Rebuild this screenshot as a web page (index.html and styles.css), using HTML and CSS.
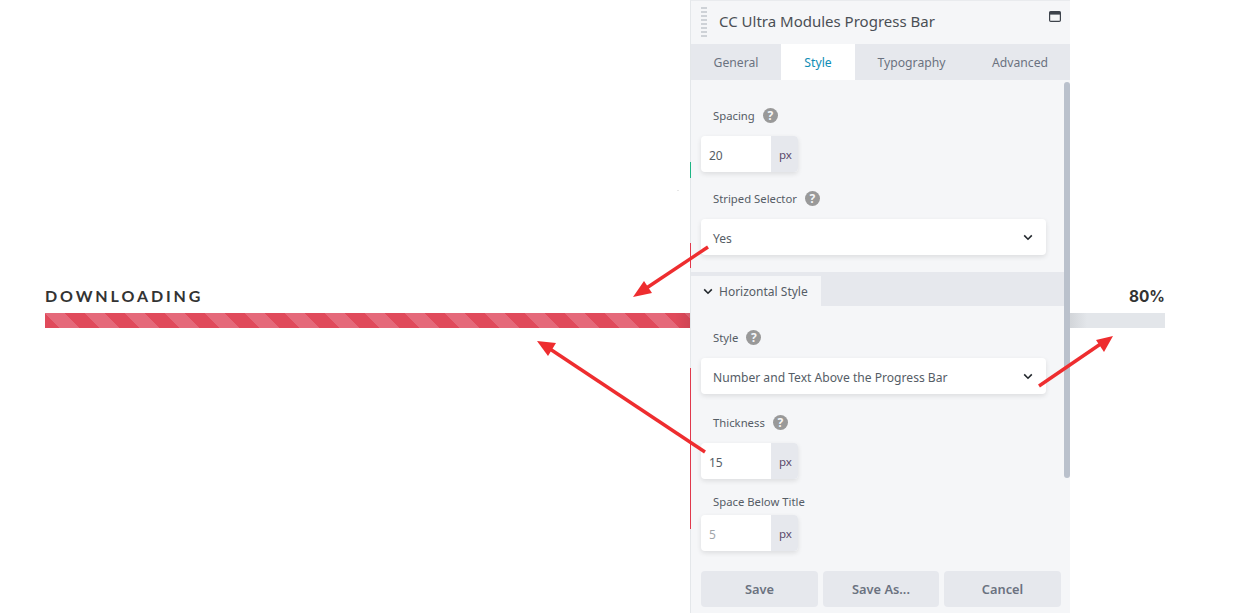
FILE: index.html
```html
<!DOCTYPE html>
<html lang="en">
<head>
    <meta charset="UTF-8">
    <meta name="viewport" content="width=device-width, initial-scale=1.0">
    <title>CC Ultra Modules Progress Bar</title>
    <link rel="stylesheet" href="styles.css">
</head>
<body>
    <div class="page">
        <div class="progress">
            <div class="progress-head">
                <span class="progress-title">DOWNLOADING</span>
                <span class="progress-value">80%</span>
            </div>
            <div class="progress-track">
                <div class="progress-fill"></div>
            </div>
        </div>
    </div>

    <div class="panel">
        <div class="panel-head">
            <div class="grip"></div>
            <span class="panel-title">CC Ultra Modules Progress Bar</span>
            <svg class="panel-max" width="12" height="11" viewBox="0 0 12 11">
                <rect x="0.6" y="0.6" width="10.8" height="9.8" rx="1.2" fill="none" stroke="#3d434b" stroke-width="1.2"/>
                <rect x="0.6" y="0.6" width="10.8" height="3" fill="#3d434b"/>
            </svg>
        </div>
        <div class="tabs">
            <div class="tab tab-general">General</div>
            <div class="tab tab-style active">Style</div>
            <div class="tab tab-typo">Typography</div>
            <div class="tab tab-advanced">Advanced</div>
        </div>
        <div class="panel-body">
            <div class="scrollbar"></div>

            <div class="field field-spacing">
                <div class="label">Spacing <span class="help">?</span></div>
                <div class="unit-input"><span class="unit-value">20</span><span class="unit">px</span></div>
            </div>

            <div class="field field-striped">
                <div class="label">Striped Selector <span class="help">?</span></div>
                <div class="select">
                    <span>Yes</span>
                    <svg class="chevron" width="10" height="7" viewBox="0 0 10 7"><path d="M1.2 1.4 5 5.2l3.8-3.8" fill="none" stroke="#23282d" stroke-width="1.6"/></svg>
                </div>
            </div>

            <div class="section-head">
                <div class="section-tab">
                    <svg class="chevron" width="10" height="7" viewBox="0 0 10 7"><path d="M1.2 1.4 5 5.2l3.8-3.8" fill="none" stroke="#23282d" stroke-width="1.6"/></svg>
                    <span>Horizontal Style</span>
                </div>
            </div>

            <div class="field field-style">
                <div class="label">Style <span class="help">?</span></div>
                <div class="select">
                    <span>Number and Text Above the Progress Bar</span>
                    <svg class="chevron" width="10" height="7" viewBox="0 0 10 7"><path d="M1.2 1.4 5 5.2l3.8-3.8" fill="none" stroke="#23282d" stroke-width="1.6"/></svg>
                </div>
            </div>

            <div class="field field-thickness">
                <div class="label">Thickness <span class="help">?</span></div>
                <div class="unit-input"><span class="unit-value">15</span><span class="unit">px</span></div>
            </div>

            <div class="field field-below">
                <div class="label label-tight">Space Below Title</div>
                <div class="unit-input"><span class="unit-value placeholder">5</span><span class="unit">px</span></div>
            </div>
        </div>
        <div class="panel-foot">
            <button class="btn btn-save">Save</button>
            <button class="btn btn-saveas">Save As...</button>
            <button class="btn btn-cancel">Cancel</button>
        </div>
    </div>

    <div class="mark mark-dot"></div>
    <div class="mark mark-green"></div>
    <div class="mark mark-red-top"></div>
    <div class="mark mark-red-bottom"></div>

    <svg class="arrows" width="1255" height="613" viewBox="0 0 1255 613">
        <g stroke="#ee2d2f" stroke-width="3.4" fill="none">
            <line x1="708" y1="247" x2="645" y2="289"/>
            <line x1="705" y1="452" x2="550" y2="349"/>
            <line x1="1039" y1="386" x2="1102" y2="343"/>
        </g>
        <g fill="#ee2d2f">
            <polygon points="633,297 644,281 652,293"/>
            <polygon points="537,341 556,343 548,356"/>
            <polygon points="1113,336 1104,352 1096,340"/>
        </g>
    </svg>
</body>
</html>
```

FILE: styles.css
```css
* {
    box-sizing: border-box;
}
body {
    margin: 0;
    height: 613px;
    overflow: hidden;
    background: #fff;
    font-family: "Noto Sans", "Open Sans", sans-serif;
}
.page {
    padding: 287px 90px 0 45px;
}
.progress-head {
    display: flex;
    justify-content: space-between;
    align-items: center;
    height: 18px;
    margin-bottom: 8px;
    color: #333;
    font-weight: 700;
}
.progress-title {
    margin-top: -2px;
    font-family: Lato, sans-serif;
    font-size: 16px;
    letter-spacing: 2.9px;
}
.progress-value {
    font-family: Inter, sans-serif;
    font-size: 15.4px;
}
.progress-track {
    height: 15px;
    background: linear-gradient(to right, #d3d6da 1026px, #e3e6ea 1042px);
}
.progress-fill {
    width: 80%;
    height: 100%;
    background-color: #e04a5b;
    background-image:
        linear-gradient(to right, transparent 630px, rgba(0, 0, 0, 0.08) 645px),
        linear-gradient(45deg, #e5697a 25%, transparent 25%, transparent 50%, #e5697a 50%, #e5697a 75%, transparent 75%);
    background-size: auto, 40px 40px;
}

/* bits of the page showing at the panel's left edge */
.mark {
    position: absolute;
    left: 690px;
    width: 1px;
}
.mark-dot {
    left: 677px;
    top: 190px;
    width: 2px;
    height: 1px;
    background: #e8e8e8;
}
.mark-green {
    top: 162px;
    height: 16px;
    background: #1db584;
}
.mark-red-top {
    top: 243px;
    height: 25px;
    background: #e0394c;
}
.mark-red-bottom {
    top: 368px;
    height: 161px;
    background: #e0394c;
}

.panel {
    position: absolute;
    left: 690px;
    top: 0;
    width: 380px;
    height: 613px;
    display: flex;
    flex-direction: column;
    background: #f5f6f8;
    border-top: 1px solid #e9ebee;
    border-left: 1px solid #e4e7ea;
    color: #555d66;
}
.panel-head {
    display: flex;
    align-items: center;
    height: 43px;
    flex: none;
    padding-left: 10px;
    position: relative;
}
.grip {
    width: 6px;
    height: 31px;
    background: repeating-linear-gradient(#ced2d7 0 2px, #f5f6f8 2px 4px);
}
.panel-title {
    margin-left: 12px;
    margin-top: -3px;
    font-size: 15px;
    color: #4a4f55;
}
.panel-max {
    position: absolute;
    right: 9px;
    top: 10px;
}
.tabs {
    display: flex;
    height: 36px;
    flex: none;
    background: #e6e8ed;
    font-size: 12.2px;
    color: #6b7280;
}
.tab {
    display: flex;
    align-items: center;
    justify-content: center;
}
.tab-general {
    width: 90px;
}
.tab-style {
    width: 74px;
}
.tab-typo {
    width: 113px;
}
.tab-advanced {
    width: 102px;
    padding-left: 2px;
}
.tab.active {
    background: #fff;
    color: #0e8db5;
}
.panel-body {
    flex: 1;
    position: relative;
    overflow: hidden;
}
.scrollbar {
    position: absolute;
    right: 0;
    top: 2px;
    width: 6px;
    height: 396px;
    border-radius: 3px;
    background: #bac1cc;
}
.field {
    padding: 0 10px;
}
.label {
    display: flex;
    align-items: center;
    gap: 8px;
    height: 16px;
    padding-left: 12px;
    margin-bottom: 13px;
    font-size: 11.3px;
    color: #555d66;
}
.label-tight {
    margin-bottom: 6px;
}
.help {
    width: 15px;
    height: 15px;
    margin-top: 1px;
    border-radius: 50%;
    background: #999;
    color: #f5f6f8;
    font-size: 12px;
    font-weight: 700;
    line-height: 15px;
    text-align: center;
}
.field-spacing {
    padding-top: 27px;
}
.field-striped {
    padding-top: 18px;
}
.field-style {
    padding-top: 23px;
}
.field-thickness {
    padding-top: 20px;
}
.field-below {
    padding-top: 14px;
}
.unit-input {
    display: flex;
    width: 97px;
    height: 36px;
    border-radius: 4px;
    overflow: hidden;
    background: #fff;
    box-shadow: 0 2px 5px rgba(0, 0, 0, 0.1);
    font-size: 12px;
}
.unit-value {
    flex: 1;
    padding: 2px 0 0 8px;
    line-height: 36px;
    color: #555d66;
}
.unit-value.placeholder {
    color: #a0a5aa;
}
.unit {
    width: 27px;
    padding-left: 2px;
    line-height: 38px;
    text-align: center;
    background: #e6e8ed;
    color: #5b4a6b;
    font-size: 11.5px;
}
.select {
    display: flex;
    align-items: center;
    justify-content: space-between;
    width: 345px;
    height: 36px;
    padding: 0 13px 0 12px;
    border-radius: 4px;
    background: #fff;
    box-shadow: 0 2px 5px rgba(0, 0, 0, 0.1);
    font-size: 12.1px;
    color: #555d66;
}
.select span {
    padding-top: 2px;
}
.section-head {
    margin-top: 17px;
    padding-top: 4px;
    height: 34px;
    background: #e6e8ed;
}
.section-tab {
    display: flex;
    align-items: center;
    gap: 6px;
    width: 130px;
    height: 30px;
    padding-left: 12px;
    background: #f5f6f8;
    font-size: 12px;
    color: #555d66;
}
.panel-foot {
    display: flex;
    gap: 5px;
    flex: none;
    height: 42px;
    padding: 0 9px 6px 10px;
}
.btn {
    height: 36px;
    border: none;
    border-radius: 4px;
    background: #e6e8ed;
    color: #6b7280;
    font-family: inherit;
    font-size: 12.8px;
    font-weight: 600;
}
.btn-save {
    width: 117px;
}
.btn-saveas {
    width: 116px;
}
.btn-cancel {
    width: 117px;
}
.arrows {
    position: absolute;
    left: 0;
    top: 0;
    pointer-events: none;
}
```
